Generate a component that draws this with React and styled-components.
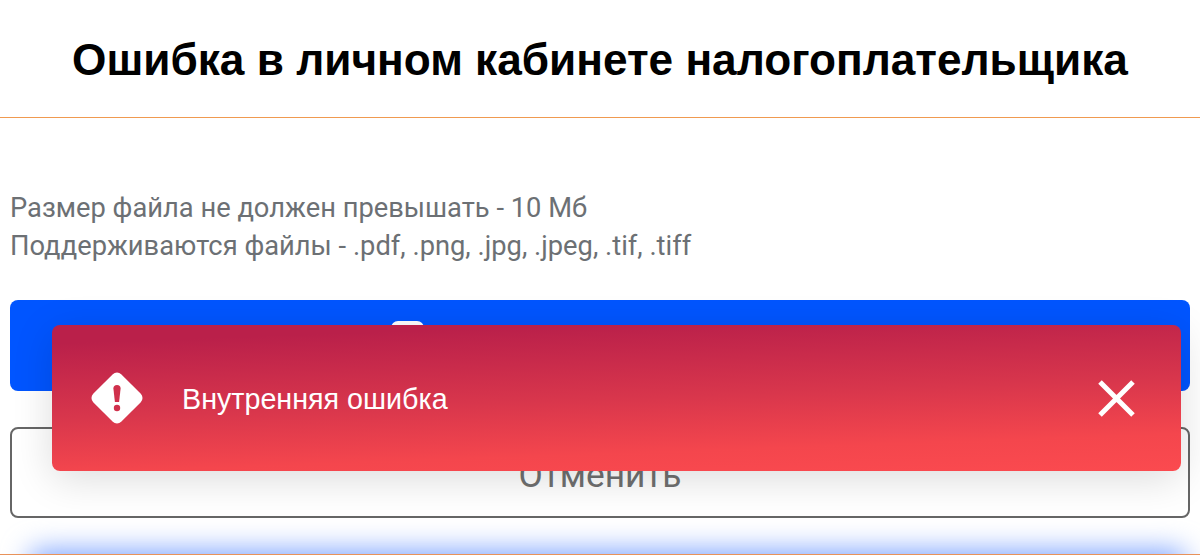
import React from 'react';
import styled, { createGlobalStyle } from 'styled-components';

const GlobalStyle = createGlobalStyle`
  html, body {
    margin: 0;
    padding: 0;
    height: 100%;
    overflow: hidden;
    background: #fff;
  }
`;

const Page = styled.div`
  position: relative;
  width: 1200px;
  height: 555px;
  box-sizing: border-box;
  overflow: hidden;
  background: #fff;
  border-bottom: 1px solid #e8925a;
`;

const Header = styled.header`
  display: flex;
  align-items: center;
  justify-content: center;
  box-sizing: border-box;
  height: 118px;
  padding-top: 3px;
  border-bottom: 1px solid #f09a50;
`;

const Title = styled.h1`
  margin: 0;
  font-family: "Liberation Sans", Arial, sans-serif;
  font-size: 44.2px;
  font-weight: 700;
  color: #000;
`;

const Content = styled.main`
  display: flex;
  flex-direction: column;
  padding: 71px 10px 0;
`;

const Hint = styled.p`
  margin: 0 0 35px;
  font-family: Roboto, sans-serif;
  font-size: 27.3px;
  line-height: 38px;
  color: #6c7074;
`;

const Button = styled.div`
  display: flex;
  align-items: center;
  justify-content: center;
  box-sizing: border-box;
  height: 91px;
  border-radius: 8px;
  font-family: Roboto, sans-serif;
  font-size: 35.3px;
`;

const UploadButton = styled(Button)`
  gap: 16px;
  background: #0055ff;
  color: #fff;
`;

const UploadIcon = styled.span`
  width: 33px;
  height: 50px;
  border-radius: 7px;
  background: #fff;
`;

const CancelButton = styled(Button)`
  margin-top: 36px;
  padding-top: 4px;
  border: 2px solid #666;
  color: #707070;
  background: #fff;
`;

const Glow = styled.div`
  margin: 32px 5px 0 20px;
  height: 60px;
  border-radius: 8px;
  background: #7ea4ff;
  filter: blur(14px);
`;

const Toast = styled.div`
  position: absolute;
  left: 52px;
  top: 325px;
  display: flex;
  align-items: center;
  width: 1129px;
  height: 146px;
  padding: 0 46px 0 38px;
  box-sizing: border-box;
  border-radius: 8px;
  background: linear-gradient(178deg, #ba204a 10%, #d8364c 50%, #f4464d 80%, #fb4a4f 100%);
  box-shadow: 0 8px 40px rgba(0, 0, 0, 0.14);
`;

const ToastText = styled.span`
  flex: 1;
  margin: 2px 0 0 38px;
  font-family: "Liberation Sans", Arial, sans-serif;
  font-size: 28.7px;
  color: #fff;
`;

const CloseButton = styled.button`
  display: flex;
  padding: 0;
  border: 0;
  background: none;
`;

const App = () => {
  return (
    <Page>
      <GlobalStyle />
      <Header>
        <Title>Ошибка в личном кабинете налогоплательщика</Title>
      </Header>
      <Content>
        <Hint>
          Размер файла не должен превышать - 10 Мб
          <br />
          Поддерживаются файлы - .pdf, .png, .jpg, .jpeg, .tif, .tiff
        </Hint>
        <UploadButton>
          <UploadIcon />
          Прикрепить документ
        </UploadButton>
        <CancelButton>Отменить</CancelButton>
        <Glow />
      </Content>
      <Toast>
        <svg width="54" height="54" viewBox="0 0 54 54">
          <path
            fill="#fff"
            d="M22.8 3.2 3.2 22.8a6 6 0 0 0 0 8.4l19.6 19.6a6 6 0 0 0 8.4 0l19.6-19.6a6 6 0 0 0 0-8.4L31.2 3.2a6 6 0 0 0-8.4 0z"
          />
          <path fill="#d0304c" d="M23.4 17.5a3.6 3.6 0 0 1 7.2 0l-1.5 13.5h-4.2z" />
          <circle cx="27" cy="37" r="3.2" fill="#d0304c" />
        </svg>
        <ToastText>Внутренняя ошибка</ToastText>
        <CloseButton aria-label="Закрыть">
          <svg width="37" height="37" viewBox="0 0 37 37">
            <path stroke="#fff" strokeWidth="5" d="M2 2l33 33M35 2 2 35" />
          </svg>
        </CloseButton>
      </Toast>
    </Page>
  );
};

export default App;
